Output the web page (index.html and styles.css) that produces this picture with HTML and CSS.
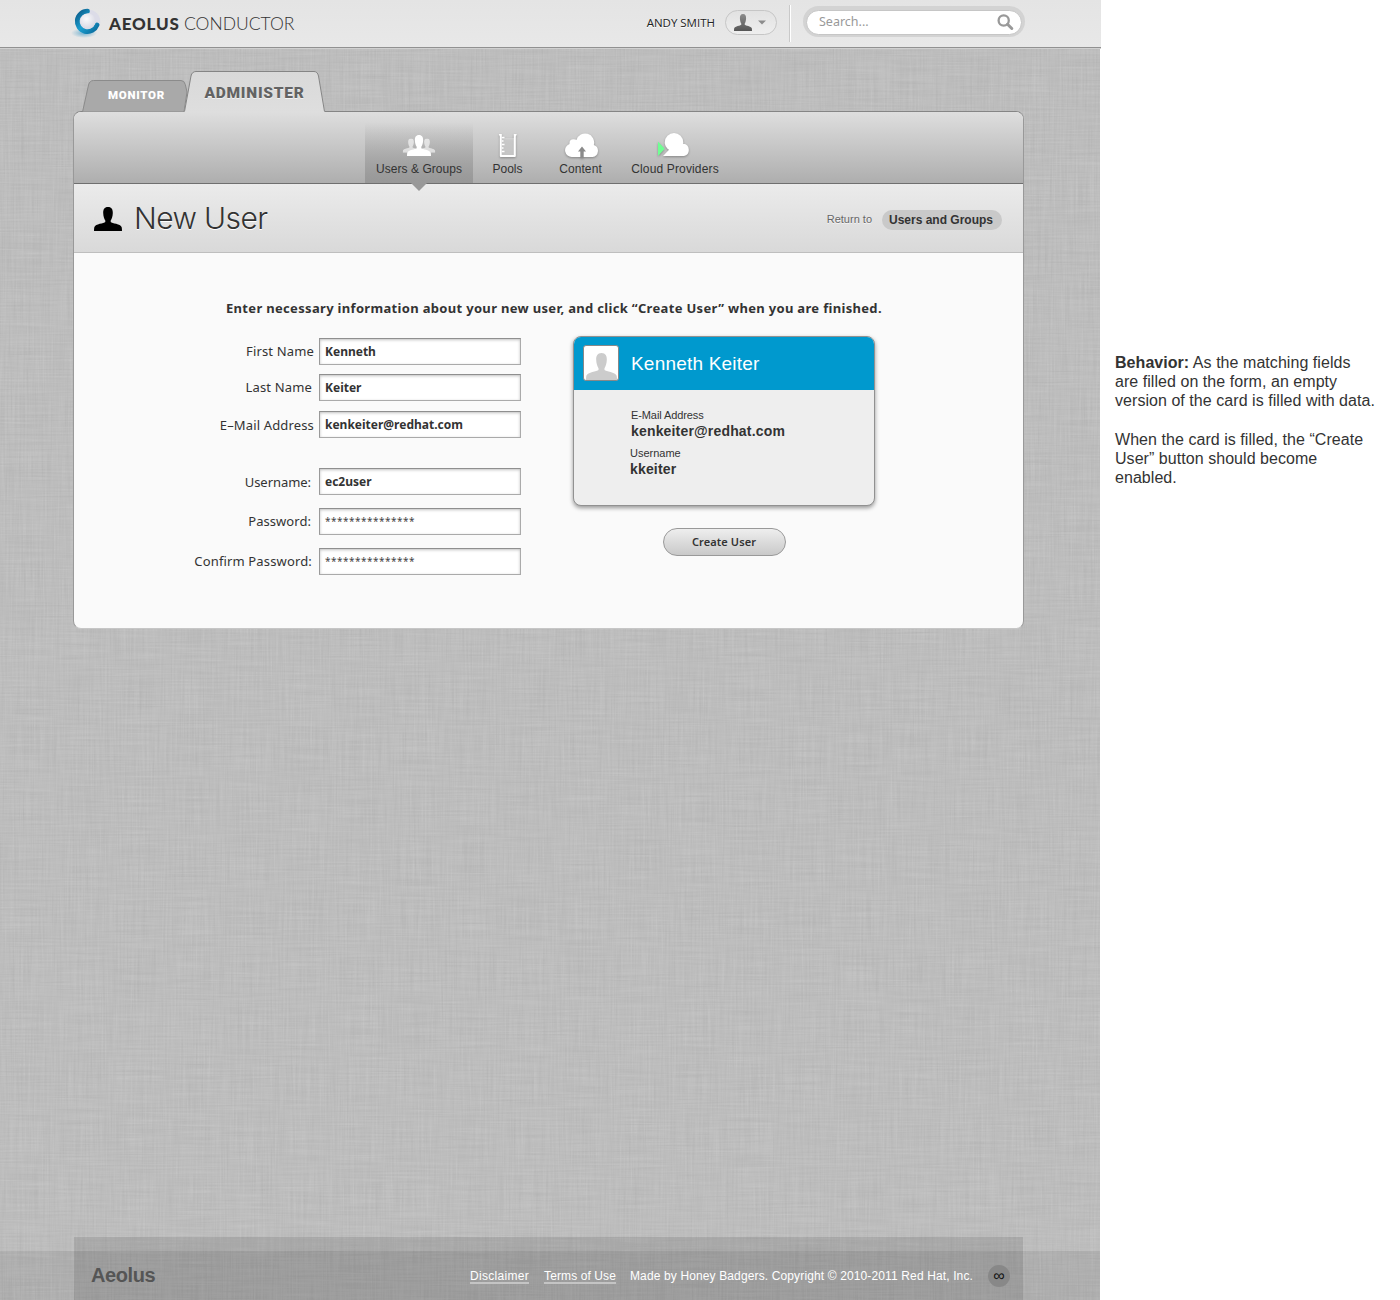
FILE: index.html
```html
<!DOCTYPE html>
<html lang="en">
<head>
<meta charset="utf-8">
<title>Aeolus Conductor - New User</title>
<link rel="stylesheet" href="styles.css">
</head>
<body>
<svg class="defs" width="0" height="0" aria-hidden="true">
  <defs>
    <symbol id="person" viewBox="0 0 28 24" preserveAspectRatio="none">
      <path d="M14 0C10.300 0 9.100 2.600 9.200 6C9.300 9.500 10.300 12 11.300 13.500V15C10 16.500 1.500 16.700.3 20.200Q0 22 0 24H28Q28 22 27.700 20.200C26.500 16.700 18 16.500 16.700 15V13.500C17.700 12 18.700 9.500 18.800 6C18.900 2.600 17.700 0 14 0z"/>
    </symbol>
    <linearGradient id="tabFill" x1="0" y1="0" x2="0" y2="1"><stop offset="0" stop-color="#d9d9d9"/><stop offset="1" stop-color="#dedede"/></linearGradient>
    <linearGradient id="userFill" x1="0" y1="0" x2="0" y2="1"><stop offset="0" stop-color="#8c8c8c"/><stop offset="1" stop-color="#555"/></linearGradient>
    <linearGradient id="ringFill" x1="0" y1="0" x2="1" y2="1"><stop offset="0" stop-color="#0b5c8a"/><stop offset=".5" stop-color="#1b9fd0"/><stop offset="1" stop-color="#0a6a9c"/></linearGradient>
    <radialGradient id="ballFill" cx=".4" cy=".35" r=".7"><stop offset="0" stop-color="#fafafc"/><stop offset="1" stop-color="#d6d6e2"/></radialGradient>
    <radialGradient id="glow"><stop offset="0" stop-color="#2a8fc0" stop-opacity=".6"/><stop offset="1" stop-color="#2a8fc0" stop-opacity="0"/></radialGradient>
    <filter id="linen" x="0" y="0" width="100%" height="100%" color-interpolation-filters="sRGB">
      <feTurbulence type="fractalNoise" baseFrequency="0.018 0.55" numOctaves="3" seed="4" result="h"/>
      <feTurbulence type="fractalNoise" baseFrequency="0.55 0.018" numOctaves="3" seed="9" result="v"/>
      <feComposite in="h" in2="v" operator="arithmetic" k2=".5" k3=".5"/>
      <feColorMatrix values=".1 0 0 0 .69  .1 0 0 0 .69  .1 0 0 0 .69  0 0 0 0 1"/>
    </filter>
  </defs>
</svg>

<div class="page">
  <div class="app">
    <svg class="linen" width="1100" height="1300" aria-hidden="true"><rect width="1100" height="1300" filter="url(#linen)"/></svg>

    <header class="masthead">
      <div class="brand">
        <svg class="brand-mark" width="32" height="32" viewBox="0 0 32 32">
          <ellipse cx="14" cy="26" rx="13" ry="5" fill="url(#glow)"/>
          <circle cx="18.500" cy="14.500" r="11.800" fill="#dcdce8"/>
          <path d="M17.500 4.200A10.200 10.200 0 1 0 27 18" fill="none" stroke="url(#ringFill)" stroke-width="4.800" stroke-linecap="round"/>
          <circle cx="18" cy="14.200" r="7.600" fill="url(#ballFill)"/>
        </svg>
        <span class="brand-strong">AEOLUS</span><span class="brand-light">CONDUCTOR</span>
      </div>
      <div class="account">
        <span class="account-name">ANDY SMITH</span>
        <button class="account-menu" type="button" aria-label="Account">
          <svg width="18" height="17" viewBox="0 0 28 24" preserveAspectRatio="none"><use href="#person" width="28" height="24" fill="url(#userFill)"/></svg>
          <svg class="caret" width="8" height="5" viewBox="0 0 8 5"><path d="M0 .5h8L4 4.500z" fill="#8c8c8c"/></svg>
        </button>
        <div class="search">
          <span>Search...</span>
          <svg width="17" height="17" viewBox="0 0 17 17" fill="none" stroke="#999"><circle cx="6.700" cy="6.500" r="5.100" stroke-width="2.300"/><path d="M10.500 10.300l4.300 4.200" stroke-width="3" stroke-linecap="round"/></svg>
        </div>
      </div>
    </header>

    <nav class="tabs">
      <a class="tab tab-monitor">
        <svg width="106" height="32" viewBox="0 0 106 32"><path d="M.5 32L6.500 5Q7.700.5 11.500.5H99q3.300 0 4.300 4L105 12L102 32z" fill="#a9a9a9" stroke="#8b8b8b"/></svg>
        <span>MONITOR</span>
      </a>
      <a class="tab tab-administer">
        <svg width="141" height="42" viewBox="0 0 141 42"><path d="M0 42L7 5Q8 .5 12 .5H130q3.500 0 4.500 4.500L141 42z" fill="url(#tabFill)"/><path d="M.5 40.500L7 5Q8 .5 12 .5H130q3.500 0 4.500 4.500L140.500 40.500" fill="none" stroke="#858585"/></svg>
        <span>ADMINISTER</span>
      </a>
    </nav>

    <main class="panel">
      <nav class="toolbar">
        <a class="tool tool-users">
          <svg width="34" height="26" viewBox="0 0 34 26" fill="#fff">
            <g opacity=".6"><use href="#person" x=".7" y="6.500" width="16.600" height="14.300"/><use href="#person" x="16.700" y="6.500" width="16.600" height="14.300"/></g>
            <use href="#person" x="5" y="3" width="24" height="21"/>
          </svg>
          <span>Users &amp; Groups</span>
        </a>
        <a class="tool tool-pools">
          <svg width="20" height="26" viewBox="0 0 20 26"><rect x="4" y="6" width="12" height="17" fill="#ddd" opacity=".6"/><path d="M.8 2H3.800V23H15.800V2H18.800L17.800 4.500V24Q17.800 25 16.800 25H2.800Q1.800 25 1.800 24V4.500z" fill="#fff"/><path d="M3.800 5.500H6.500M3.800 9H5.500M3.800 12.500H6.500M3.800 16H5.500M3.800 19.500H6.500" stroke="#fff" stroke-width="1.500"/></svg>
          <span>Pools</span>
        </a>
        <a class="tool tool-content">
          <svg width="34" height="26" viewBox="0 0 34 26"><path d="M8 25A6.700 6.700 0 0 1 5.500 12Q5 7.500 9.500 7.300Q11.500 7.300 12.500 8A8.800 8.800 0 0 1 29.800 13A6.200 6.200 0 0 1 28.500 25z" fill="#fff"/><path d="M16.300 26v-6.500h-2.300l4-5l4 5h-2.300v6.500z" fill="#8a8a8a"/></svg>
          <span>Content</span>
        </a>
        <a class="tool tool-cloud">
          <svg width="34" height="26" viewBox="0 0 34 26"><path d="M0 9.500L6.700 16.700L0 24z" fill="#6fff92"/><circle cx="16" cy="10.200" r="9.200" fill="#fff"/><path d="M5 24L11.500 17.300L6.500 11.500L16 8L25.300 11.800A6.200 6.200 0 0 1 26 24z" fill="#fff"/></svg>
          <span>Cloud Providers</span>
        </a>
      </nav>

      <div class="titlebar">
        <svg width="28" height="24" viewBox="0 0 28 24"><use href="#person" width="28" height="24"/></svg>
        <h1>New User</h1>
        <span class="return-label">Return to</span>
        <a class="return-link">Users and Groups</a>
      </div>

      <section class="content">
        <p class="intro">Enter necessary information about your new user, and click “Create User” when you are finished.</p>
        <div class="columns">
          <form class="fields">
            <label class="field first"><span>First Name</span><b>Kenneth</b></label>
            <label class="field last"><span>Last Name</span><b>Keiter</b></label>
            <label class="field email"><span>E–Mail Address</span><b>kenkeiter@redhat.com</b></label>
            <label class="field username"><span>Username:</span><b>ec2user</b></label>
            <label class="field password"><span>Password:</span><b class="secret">***************</b></label>
            <label class="field confirm"><span>Confirm Password:</span><b class="secret">***************</b></label>
          </form>
          <div class="preview">
            <article class="card">
              <header class="card-head">
                <span class="avatar"><svg width="31" height="27" viewBox="0 0 28 24" preserveAspectRatio="none"><use href="#person" width="28" height="24" fill="#ccc"/></svg></span>
                <span class="card-name">Kenneth Keiter</span>
              </header>
              <dl class="card-body">
                <dt>E-Mail Address</dt><dd class="card-email">kenkeiter@redhat.com</dd>
                <dt class="dt-user">Username</dt><dd class="dd-user">kkeiter</dd>
              </dl>
            </article>
            <button class="create" type="button">Create User</button>
          </div>
        </div>
      </section>
    </main>

    <footer class="footer">
      <div class="footer-inner">
        <strong class="footer-brand">Aeolus</strong>
        <a class="disclaimer">Disclaimer</a>
        <a class="terms">Terms of Use</a>
        <span class="legal">Made by Honey Badgers. Copyright © 2010-2011 Red Hat, Inc.</span>
        <span class="infinity">∞</span>
      </div>
    </footer>
  </div>

  <aside class="notes">
    <p><strong>Behavior:</strong> As the matching fields<br>are filled on the form, an empty<br>version of the card is filled with data.</p>
    <p>When the card is filled, the “Create<br>User” button should become<br>enabled.</p>
  </aside>
</div>
</body>
</html>
```
FILE: styles.css
```css
* { box-sizing: border-box; }
body { margin: 0; background: #fff; color: #333; font-family: "Liberation Sans", Arial, sans-serif; }
p, h1, dl, dd { margin: 0; }
svg { display: block; flex: none; }
span, a, b { white-space: nowrap; }
button { font: inherit; color: inherit; padding: 0; }
.defs { position: absolute; }

.page { display: flex; width: 1400px; height: 1300px; overflow: hidden; }
.app { position: relative; isolation: isolate; display: flex; flex-direction: column; width: 1100px; height: 1300px; background: #bcbcbc; }
.linen { position: absolute; inset: 0; z-index: -1; }

/* Masthead */
.masthead { display: flex; justify-content: space-between; width: 1101px; height: 48px; padding: 0 79px 0 70px; background: linear-gradient(#e4e4e4, #e8e8e8); border-bottom: 1px solid #919191; box-shadow: 0 1px 0 #d0d0d0; }
.brand { display: flex; align-items: center; height: 46px; font-family: Lato, sans-serif; font-size: 17px; color: #333; }
.brand-mark { margin: 0 7px 0 0; }
.brand-strong { width: 75px; font-weight: 900; letter-spacing: .8px; }
.brand-light { font-weight: 300; font-size: 17.500px; letter-spacing: 0; }
.account { display: flex; align-items: flex-start; }
.account-name { margin: 15px 10px 0 0; font: 500 11.500px/16px "Open Sans", sans-serif; color: #222; text-shadow: 0 1px 0 #fff; }
.account-menu { display: flex; align-items: center; width: 52px; height: 25px; margin-top: 10px; padding: 0 0 1px 8px; border: 1px solid #c6c6c6; border-radius: 13px; background: linear-gradient(#e2e2e2, #eee); }
.caret { margin-left: 6px; }
.search { position: relative; display: flex; align-items: center; justify-content: space-between; width: 216px; height: 25px; margin: 10px 0 0 29px; padding: 0 7px 1px 12px; border: 1px solid #c6c6c6; border-radius: 13px; background: #fff; box-shadow: 0 -1px 0 3px #d3d3d3; color: #999; font: 12.500px/20px "Noto Sans", sans-serif; }
.search::before { content: ""; position: absolute; left: -18px; top: -6px; width: 2px; height: 37px; background: linear-gradient(90deg, #c9c9c9 50%, #fff 50%); }

/* Tabs */
.tabs { display: flex; align-items: flex-end; height: 64px; padding-left: 82px; z-index: 2; }
.tab { position: relative; display: flex; justify-content: center; }
.tab svg { position: absolute; left: 0; top: 0; }
.tab span { position: relative; }
.tab-monitor { width: 102px; height: 32px; padding: 7px 0 0 7px; font: 900 11.500px/17px Roboto, sans-serif; letter-spacing: .7px; color: #fff; }
.tab-administer { width: 140px; height: 41px; padding: 12px 0 0 1px; font: 900 15.500px/20px Roboto, sans-serif; letter-spacing: .75px; color: #636363; text-shadow: 0 1px 0 #f2f2f2; z-index: 1; }

/* Panel */
.panel { display: flex; flex-direction: column; width: 951px; height: 518px; margin: -1px 0 0 73px; border: 1px solid #999; border-top-color: #858585; border-bottom-color: #c6c6c6; border-radius: 8px; background: #fafafa; z-index: 1; }
.toolbar { display: flex; height: 72px; padding-left: 291px; border-bottom: 1px solid #6f6f6f; border-radius: 7px 7px 0 0; background: linear-gradient(#dedede, #aeaeae); }
.tool { display: flex; flex-direction: column; align-items: center; padding-top: 20px; font-size: 12px; line-height: 14px; color: #333; }
.tool svg { filter: drop-shadow(0 1px 1px rgba(0, 0, 0, .3)); overflow: visible; }
.tool span { margin-top: 4px; }
.tool-users { position: relative; width: 108px; background: linear-gradient(rgba(130, 130, 130, 0) 15%, #989898); letter-spacing: .05px; }
.tool-users svg { filter: none; }
.tool-users::after { content: ""; position: absolute; left: 46px; top: 71px; border: 8px solid transparent; border-top-color: #989898; border-bottom: 0; }
.tool-pools { width: 69px; }
.tool-content { width: 77px; letter-spacing: .1px; }
.tool-cloud { width: 112px; letter-spacing: .15px; }

.titlebar { display: flex; align-items: center; height: 69px; padding: 0 21px 0 20px; border-bottom: 1px solid #bebebe; background: linear-gradient(#ebebeb, #d9d9d9); }
.titlebar > svg { margin-top: 1px; }
.titlebar h1 { margin: 0 auto 0 12px; font: 300 30px/36px Inter, "Liberation Sans", sans-serif; letter-spacing: -.6px; color: #333; text-shadow: 0 1px 0 #fff; }
.return-label { margin: 2px 10px 0 0; font-size: 11px; color: #666; text-shadow: 0 1px 0 #f5f5f5; }
.return-link { width: 120px; height: 20px; margin-top: 4px; padding-left: 7px; border-radius: 10px; background: #c9c9c9; font-size: 12px; font-weight: 700; line-height: 20px; }

/* Form */
.content { padding-top: 46px; }
.intro { padding-left: 152px; font: 700 13px/18px "Noto Sans", sans-serif; letter-spacing: .32px; white-space: nowrap; }
.columns { display: flex; padding-top: 19px; }
.fields { width: 447px; padding-top: 2px; font: 13px/18px "Noto Sans", sans-serif; }
.field { display: flex; align-items: center; height: 27px; }
.field span { width: 245px; padding: 0 5px 2px 0; letter-spacing: .15px; text-align: right; }
.field b { width: 202px; height: 27px; padding-left: 5px; border: 1px solid #999; border-color: #8f8f8f #aaa #aaa #999; background: #fff; box-shadow: inset 0 1px 3px rgba(0, 0, 0, .25); font-size: 12px; line-height: 25px; }
.last { margin-top: 9px; }
.email { margin-top: 10px; }
.username { margin-top: 30px; }
.password, .confirm { margin-top: 13px; }
.last span { padding-right: 7px; }
.email span { padding: 0 5px 0 0; }
.username span { padding: 0 8px 0 0; letter-spacing: -.05px; }
.password span { padding-right: 8px; letter-spacing: .05px; }
.confirm span { padding-right: 7px; }
.field .secret { font-weight: 400; font-size: 10px; letter-spacing: .49px; line-height: 25px; color: #444; }

.preview { display: flex; flex-direction: column; align-items: center; width: 302px; margin-left: 52px; }
.card { width: 302px; height: 170px; overflow: hidden; border: 1px solid #919191; border-radius: 8px; background: #eee; box-shadow: 0 2px 4px rgba(0, 0, 0, .4); }
.card-head { display: flex; align-items: center; height: 53px; padding-left: 9px; background: #0099ce; }
.avatar { display: flex; align-items: flex-end; justify-content: center; width: 36px; height: 36px; margin-bottom: 1px; border: 1px solid #888; border-radius: 3px; background: #fff; }
.card-name { margin-left: 12px; font-size: 19px; letter-spacing: .2px; color: #fff; }
.card-body { padding: 18px 0 0 57px; }
.card-body dt { font-size: 11px; line-height: 14px; letter-spacing: -.1px; }
.card-body dd { font-size: 14px; font-weight: 700; line-height: 18px; letter-spacing: .17px; }
.card-body .dt-user { margin: 6px 0 0 -1px; letter-spacing: 0; }
.card-body .dd-user { margin-left: -1px; }
.create { width: 123px; height: 28px; margin-top: 22px; border: 1px solid #999; border-radius: 14px; background: linear-gradient(#eee, #c9c9c9); font: 600 11px/24px "Noto Sans", sans-serif; letter-spacing: .1px; }

/* Footer */
.footer { position: relative; height: 63px; margin-top: auto; padding-left: 74px; }
.footer::before { content: ""; position: absolute; inset: 14px 0 0; background: rgba(0, 0, 0, .07); }
.footer-inner { position: relative; display: flex; align-items: center; width: 949px; height: 63px; padding: 14px 13px 0 17px; background: rgba(0, 0, 0, .1); color: #fff; font-size: 12px; }
.footer-brand { margin-right: auto; font-size: 20px; letter-spacing: -.4px; color: #555; }
.footer-inner a { margin-top: 1px; padding-top: 1px; line-height: 12px; border-bottom: 2px solid #c4c4c4; }
.footer-inner .disclaimer { margin-right: 15px; letter-spacing: .3px; }
.footer-inner .terms { margin-right: 14px; letter-spacing: .1px; }
.legal { letter-spacing: .13px; }
.infinity { width: 22px; height: 22px; margin-left: 15px; border-radius: 50%; background: #888; color: #111; font-size: 16px; line-height: 22px; text-align: center; }

/* Notes */
.notes { width: 300px; padding: 353px 0 0 15px; font-size: 16px; line-height: 19.200px; letter-spacing: .05px; white-space: nowrap; }
.notes p + p { margin-top: 19px; }
```
